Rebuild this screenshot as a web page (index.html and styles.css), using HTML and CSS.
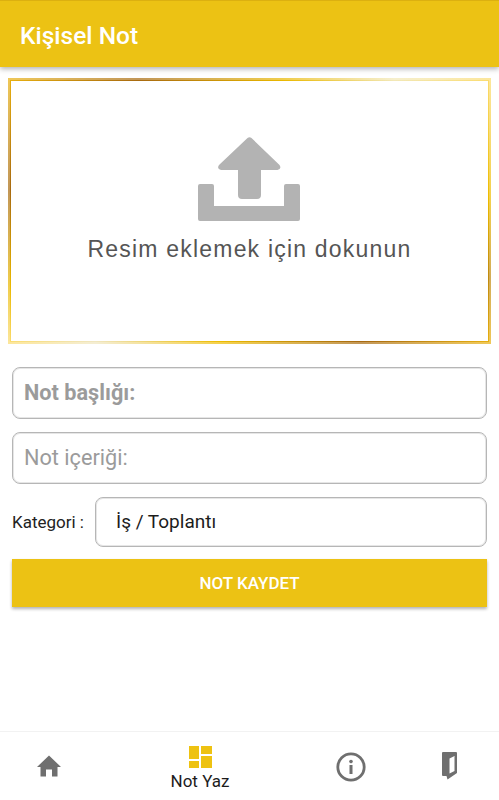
FILE: index.html
```html
<!DOCTYPE html>
<html lang="tr">

<head>
    <title>Kişisel Not</title>
    <meta charset="UTF-8">
    <meta name="viewport" content="width=499, user-scalable=no">
    <link rel="stylesheet" href="styles.css">
</head>

<body>
    <header class="topbar">Kişisel Not</header>
    <main class="content">
        <div class="photo-frame">
            <div class="photo-inner">
                <svg class="upload-icon" width="103" height="85" viewBox="0 0 103 85">
                    <path fill="#b3b3b3" d="M49.500 1q2-1.500 4 0l28 27q2.500 4-2 5h-16.500v25q0 4-4 4h-15q-4 0-4-4v-25h-17q-4.500-1-2-5z"/>
                    <path fill="#b3b3b3" d="M2 47h12q2 0 2 2v20h70v-20q0-2 2-2h12q2 0 2 2v33q0 2-2 2h-98q-2 0-2-2v-33q0-2 2-2z"/>
                </svg>
                <p class="photo-label">Resim eklemek için dokunun</p>
            </div>
        </div>
        <form class="note-form">
            <div class="field field-title">Not başlığı:</div>
            <div class="field field-body">Not içeriği:</div>
            <div class="category-row">
                <span class="category-label">Kategori :</span>
                <div class="category-select">İş / Toplantı</div>
            </div>
            <div class="save-button">NOT KAYDET</div>
        </form>
    </main>
    <nav class="bottom-nav">
        <div class="nav-item nav-home">
            <svg width="24" height="22" viewBox="0 0 24 22">
                <path fill="#6f6f6f" d="M12 .5l12 11.500h-3.500v9.500h-5.500v-7h-6v7h-5.500v-9.500h-3.500z"/>
            </svg>
        </div>
        <div class="nav-item nav-write">
            <svg width="23" height="22" viewBox="0 0 23 22">
                <path fill="#eec211" d="M0 0h10v13h-10zM12 0h11v8h-11zM12 10h11v12h-11zM0 15h10v7h-10z"/>
            </svg>
            <span class="nav-text">Not Yaz</span>
        </div>
        <div class="nav-item nav-info">
            <svg width="30" height="30" viewBox="0 0 30 30">
                <circle cx="15" cy="15" r="13.200" fill="none" stroke="#6f6f6f" stroke-width="2.800"/>
                <rect x="13.500" y="13" width="3" height="9" fill="#6f6f6f"/>
                <circle cx="15" cy="9.500" r="1.800" fill="#6f6f6f"/>
            </svg>
        </div>
        <div class="nav-item nav-exit">
            <svg width="15" height="28" viewBox="0 0 15 28">
                <path fill="#6f6f6f" fill-rule="evenodd" d="M1 0h13q1 0 1 1v20l-9.500 6.500-1-3.500h-3.500q-1 0-1-1v-22q0-1 1-1zM12.500 4l-5 2.500v15l5-2.500z"/>
            </svg>
        </div>
    </nav>
</body>

</html>
```

FILE: styles.css
```css
body {
    margin: 0;
    height: 800px;
    display: flex;
    flex-direction: column;
    background: #fff;
    font-family: Roboto, sans-serif;
    overflow: hidden;
}

.topbar {
    height: 67px;
    box-sizing: border-box;
    padding: 20px 0 0 20px;
    border-top: 1px solid #dcb010;
    background: #ecc214;
    color: #fff;
    font-size: 24.500px;
    font-weight: 500;
    line-height: 30px;
    box-shadow: 0 2px 5px rgba(0, 0, 0, .3);
}

.content {
    flex: 1;
    padding: 11px 12px 0;
}

/* lighter outer ring: the see-through border sits over the gradient */
.photo-frame {
    margin: 0 -4px;
    height: 266px;
    box-sizing: border-box;
    padding: 1px;
    border: 2px solid rgba(255, 255, 255, .3);
    background-origin: border-box;
    background-clip: border-box;
    background-image:
        linear-gradient(90deg, #e8b010, #a86a10 27%, #eab800 57%, #f2e8b8 80%, #fbdc70),
        linear-gradient(90deg, #fbdc70, #f0e6c0 18%, #eebc00 44%, #a86a10 73%, #e8b010),
        linear-gradient(180deg, #e8b010, #a86a10 42%, #eab800 78%, #fbdc70),
        linear-gradient(180deg, #fbdc70, #eebc00 45%, #c08a10 75%, #e8b010);
    background-position: top, bottom, left, right;
    background-size: 100% 3px, 100% 3px, 3px 100%, 3px 100%;
    background-repeat: no-repeat;
}

.photo-inner {
    height: 100%;
    display: flex;
    flex-direction: column;
    align-items: center;
    padding-top: 56px;
    box-sizing: border-box;
    background: #fff;
}

.photo-label {
    margin: 14px 0 0;
    color: #555;
    font-family: "Liberation Sans", sans-serif;
    font-size: 23px;
    line-height: 26px;
    letter-spacing: 1.200px;
}

.note-form {
    margin-top: 23px;
}

.field,
.category-select {
    box-sizing: border-box;
    border: 1px solid #b6b6b6;
    border-radius: 8px;
    background: #fff;
    box-shadow: inset 0 0 0 1px #e6e6e6;
}

.field {
    height: 52px;
    margin-bottom: 13px;
    padding-left: 11px;
    color: #9b9b9b;
    font-size: 21.700px;
    line-height: 50px;
}

.field-title {
    font-weight: 700;
}

.category-row {
    display: flex;
    align-items: center;
    height: 50px;
}

.category-label {
    width: 83px;
    color: #222;
    font-size: 17px;
}

.category-select {
    flex: 1;
    height: 50px;
    padding-left: 20px;
    color: #1c1c1c;
    font-size: 19px;
    line-height: 48px;
}

.save-button {
    height: 48px;
    margin-top: 12px;
    background: #ecc214;
    color: #fff;
    font-size: 17px;
    font-weight: 500;
    line-height: 49px;
    text-align: center;
    box-shadow: 0 2px 3px rgba(0, 0, 0, .3);
}

.bottom-nav {
    height: 68px;
    display: flex;
    border-top: 1px solid #f2f2f2;
    background: #fff;
}

.nav-item {
    display: flex;
    flex-direction: column;
    align-items: center;
}

.nav-home {
    width: 98px;
    padding-top: 23px;
}

.nav-write {
    width: 204px;
    padding-top: 14px;
}

.nav-info {
    width: 98px;
    padding-top: 20px;
}

.nav-exit {
    width: 99px;
    padding-top: 20px;
}

.nav-text {
    margin-top: 3px;
    color: #1c1c1c;
    font-size: 17px;
    line-height: 20px;
}
```
